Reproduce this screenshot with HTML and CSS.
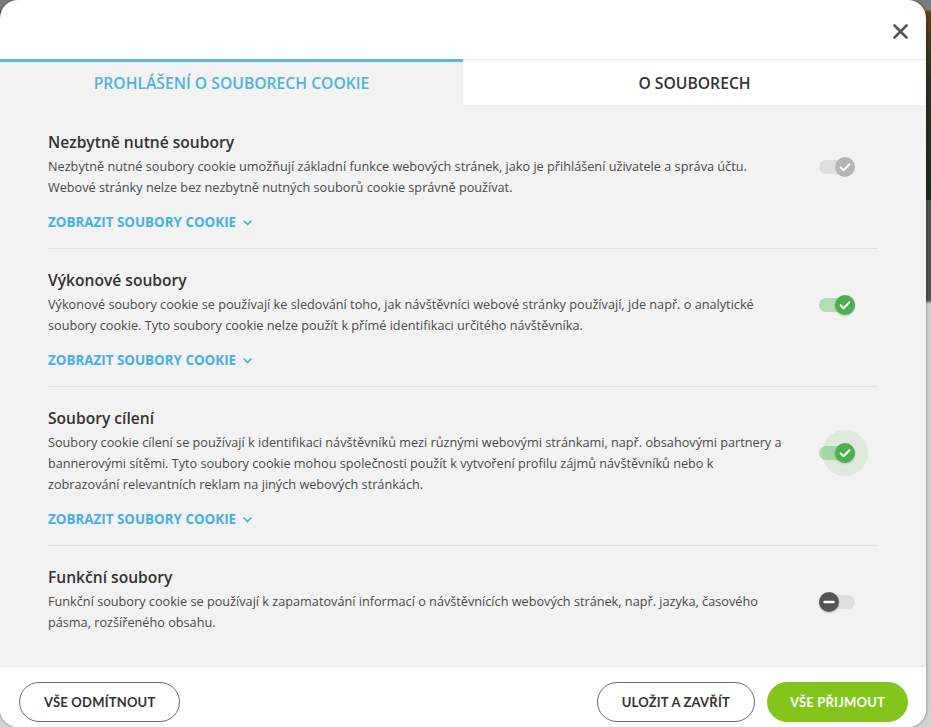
FILE: index.html
```html
<!DOCTYPE html>
<html lang="cs">
<head>
<meta charset="utf-8">
<title>Nastavení souborů cookie</title>
<link rel="stylesheet" href="styles.css">
</head>
<body>
<div class="modal">
  <div class="modal-head">
    <button class="close" aria-label="Zavřít">
      <svg width="15" height="15" viewBox="0 0 15 15"><path d="M1.5 1.5 L13.5 13.5 M13.5 1.5 L1.5 13.5" stroke="#555" stroke-width="2.6" stroke-linecap="round" fill="none"/></svg>
    </button>
  </div>
  <div class="tabs">
    <div class="tab active">PROHLÁŠENÍ O SOUBORECH COOKIE</div>
    <div class="tab">O SOUBORECH</div>
  </div>
  <div class="content">
    <div class="section">
      <div class="row">
        <div class="text">
          <h3 class="title">Nezbytně nutné soubory</h3>
          <p class="desc">Nezbytně nutné soubory cookie umožňují základní funkce webových stránek, jako je přihlášení uživatele a správa účtu. Webové stránky nelze bez nezbytně nutných souborů cookie správně používat.</p>
        </div>
        <div class="toggle-cell">
          <span class="toggle disabled"><span class="thumb"><svg width="20" height="20" viewBox="0 0 20 20"><path d="M5.6 10.4 L8.6 13.3 L14.4 7.2" stroke="#fff" stroke-width="2" fill="none" stroke-linecap="round" stroke-linejoin="round"/></svg></span></span>
        </div>
      </div>
      <a class="more">ZOBRAZIT SOUBORY COOKIE <svg class="chev" width="9" height="6" viewBox="0 0 9 6"><path d="M1 1 L4.5 4.5 L8 1" stroke="#45b1e0" stroke-width="1.6" fill="none" stroke-linecap="round"/></svg></a>
    </div>
    <div class="section">
      <div class="row">
        <div class="text">
          <h3 class="title">Výkonové soubory</h3>
          <p class="desc">Výkonové soubory cookie se používají ke sledování toho, jak návštěvníci webové stránky používají, jde např. o analytické soubory cookie. Tyto soubory cookie nelze použít k přímé identifikaci určitého návštěvníka.</p>
        </div>
        <div class="toggle-cell">
          <span class="toggle on"><span class="thumb"><svg width="20" height="20" viewBox="0 0 20 20"><path d="M5.6 10.4 L8.6 13.3 L14.4 7.2" stroke="#fff" stroke-width="2" fill="none" stroke-linecap="round" stroke-linejoin="round"/></svg></span></span>
        </div>
      </div>
      <a class="more">ZOBRAZIT SOUBORY COOKIE <svg class="chev" width="9" height="6" viewBox="0 0 9 6"><path d="M1 1 L4.5 4.5 L8 1" stroke="#45b1e0" stroke-width="1.6" fill="none" stroke-linecap="round"/></svg></a>
    </div>
    <div class="section">
      <div class="row">
        <div class="text">
          <h3 class="title">Soubory cílení</h3>
          <p class="desc">Soubory cookie cílení se používají k identifikaci návštěvníků mezi různými webovými stránkami, např. obsahovými partnery a bannerovými sítěmi. Tyto soubory cookie mohou společnosti použít k vytvoření profilu zájmů návštěvníků nebo k zobrazování relevantních reklam na jiných webových stránkách.</p>
        </div>
        <div class="toggle-cell">
          <span class="toggle on focus"><span class="halo"></span><span class="thumb"><svg width="20" height="20" viewBox="0 0 20 20"><path d="M5.6 10.4 L8.6 13.3 L14.4 7.2" stroke="#fff" stroke-width="2" fill="none" stroke-linecap="round" stroke-linejoin="round"/></svg></span></span>
        </div>
      </div>
      <a class="more">ZOBRAZIT SOUBORY COOKIE <svg class="chev" width="9" height="6" viewBox="0 0 9 6"><path d="M1 1 L4.5 4.5 L8 1" stroke="#45b1e0" stroke-width="1.6" fill="none" stroke-linecap="round"/></svg></a>
    </div>
    <div class="section last">
      <div class="row">
        <div class="text">
          <h3 class="title">Funkční soubory</h3>
          <p class="desc">Funkční soubory cookie se používají k zapamatování informací o návštěvnících webových stránek, např. jazyka, časového pásma, rozšířeného obsahu.</p>
        </div>
        <div class="toggle-cell">
          <span class="toggle off"><span class="thumb"><svg width="20" height="20" viewBox="0 0 20 20"><path d="M5.5 10 L14.5 10" stroke="#fff" stroke-width="2.4" fill="none" stroke-linecap="round"/></svg></span></span>
        </div>
      </div>
    </div>
  </div>
  <div class="footer">
    <button class="btn outline">VŠE ODMÍTNOUT</button>
    <div class="footer-right">
      <button class="btn outline">ULOŽIT A ZAVŘÍT</button>
      <button class="btn primary">VŠE PŘIJMOUT</button>
    </div>
  </div>
</div>
</body>
</html>
```

FILE: styles.css
```css
html, body {
  margin: 0;
  padding: 0;
  height: 100%;
}
body {
  font-family: "Open Sans", "Liberation Sans", sans-serif;
  background: linear-gradient(to bottom, #7a7a7a 0, #7a7a7a 10px, #5a3f22 12px, #2b3022 80px, #1f2a1c 200px, #4f4f4f 200px, #4f4f4f 300px, #d2d2d2 304px, #d2d2d2 100%);
  overflow: hidden;
}
.modal {
  width: 926px;
  height: 727px;
  background: #fff;
  border-radius: 18px;
  overflow: hidden;
  display: flex;
  flex-direction: column;
  box-shadow: 0 0 3px rgba(0, 0, 0, 0.5);
}
.modal-head {
  height: 59px;
  flex: none;
  display: flex;
  justify-content: flex-end;
  align-items: center;
  padding: 3px 18px 0 0;
  box-sizing: border-box;
}
.close {
  border: 0;
  background: none;
  padding: 0;
  width: 15px;
  height: 15px;
  display: block;
  cursor: pointer;
}
.close svg { display: block; }
.tabs {
  display: flex;
  height: 46px;
  flex: none;
}
.tab {
  flex: 1;
  display: flex;
  align-items: center;
  justify-content: center;
  font-size: 15.7px;
  font-weight: 600;
  color: #333;
  background: #fff;
  border-top: 1px solid #ececec;
  box-sizing: border-box;
}
.tab.active {
  background: #f2f2f2;
  color: #4db3e0;
  border-top: 3px solid #5bb7e1;
  padding-bottom: 1px;
}
.content {
  flex: 1;
  background: #f2f2f2;
  padding: 6px 48px 0;
}
.section {
  padding: 20px 0 16px;
  border-bottom: 1px solid #e1e1e1;
}
.section.last {
  border-bottom: 0;
}
.row {
  display: flex;
  align-items: center;
}
.text {
  flex: 1;
  min-width: 0;
}
.title {
  margin: 0;
  font-size: 15.6px;
  line-height: 22px;
  font-weight: 600;
  color: #333;
}
.desc {
  margin: 3px 0 0;
  font-size: 12.7px;
  line-height: 21px;
  color: #4a4a4a;
}
.toggle-cell {
  width: 59px;
  flex: none;
  padding-left: 33px;
  margin-top: 4px;
}
.toggle {
  position: relative;
  display: block;
  width: 36px;
  height: 14px;
  border-radius: 7px;
  background: #dcdcdc;
}
.toggle .thumb {
  position: absolute;
  top: -3px;
  width: 20px;
  height: 20px;
  border-radius: 50%;
  box-shadow: 0 1px 2px rgba(0, 0, 0, 0.2);
}
.toggle .thumb svg { display: block; }
.toggle.disabled { background: #dedede; }
.toggle.disabled .thumb { right: 0; background: #b5b5b5; box-shadow: none; }
.toggle.on { background: #b3dbb4; }
.toggle.on .thumb { right: 0; background: #4caf50; }
.toggle.off { background: #dedede; }
.toggle.off .thumb { left: 0; background: #555; }
.toggle .halo {
  position: absolute;
  right: -13px;
  top: -16px;
  width: 46px;
  height: 46px;
  border-radius: 50%;
  background: rgba(76, 175, 80, 0.13);
}
.more {
  display: inline-flex;
  align-items: center;
  gap: 7px;
  margin-top: 14px;
  font-size: 13.4px;
  line-height: 20px;
  font-weight: 700;
  color: #45b1e0;
  cursor: pointer;
}
.more .chev { margin-top: 1px; }
.footer {
  flex: none;
  height: 61px;
  box-sizing: border-box;
  border-top: 1px solid #e6e6e6;
  display: flex;
  justify-content: space-between;
  align-items: flex-start;
  padding: 15px 18px 0 19px;
  background: #fff;
}
.footer-right {
  display: flex;
  gap: 12px;
}
.btn {
  height: 40px;
  border-radius: 20px;
  font-family: Lato, "Open Sans", sans-serif;
  font-weight: 700;
  font-size: 13px;
  letter-spacing: 0.2px;
  padding: 0 24px;
  cursor: pointer;
  box-sizing: border-box;
}
.btn.outline {
  background: #fff;
  border: 1px solid #6a6a6a;
  color: #333;
}
.btn.primary {
  background: #84c51c;
  border: 1px solid #84c51c;
  color: #fff;
  padding: 0 22px;
}
```
